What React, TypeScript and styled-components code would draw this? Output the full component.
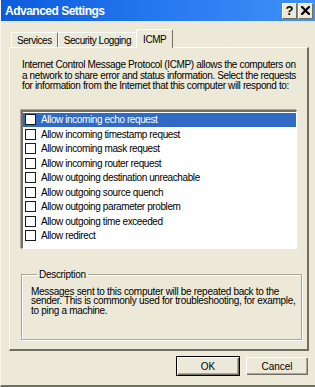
import React from "react";
import styled, { createGlobalStyle } from "styled-components";

const Global = createGlobalStyle`
  html, body { margin: 0; padding: 0; background: #ECE9D8; }
  body { font-family: "Liberation Sans", Arial, sans-serif; }
  * { box-sizing: border-box; }
`;

const Window = styled.div`
  width: 315px;
  height: 387px;
  background: #ECE9D8;
  display: flex;
  flex-direction: column;
  border-left: 1px solid #F5F4EE;
  border-bottom: 2px solid #716F64;
  overflow: hidden;
`;

const TitleBar = styled.div`
  height: 21px;
  flex: none;
  display: flex;
  align-items: center;
  padding: 0 2px 0 4px;
  background: linear-gradient(to right, #0B5BDD 0%, #2A7AF0 55%, #4090F8 100%);
`;

const Title = styled.div`
  flex: 1;
  color: #fff;
  font-weight: bold;
  font-size: 12px;
  letter-spacing: -0.5px;
`;

const CaptionButton = styled.div`
  width: 15px;
  height: 16px;
  margin-left: 1px;
  background: #ECE9D8;
  border-top: 1px solid #fff;
  border-left: 1px solid #fff;
  border-right: 1px solid #716F64;
  border-bottom: 1px solid #716F64;
  display: flex;
  align-items: center;
  justify-content: center;
  font-weight: bold;
  font-size: 13px;
  color: #000;
  line-height: 1;
`;

const Body = styled.div`
  flex: 1;
  display: flex;
  flex-direction: column;
  padding: 8px 6px 0 8px;
`;

const TabRow = styled.div`
  display: flex;
  align-items: flex-end;
  height: 19px;
  padding-left: 2px;
  margin-bottom: -1px;
  position: relative;
  z-index: 1;
`;

const Tab = styled.div<{ $active?: boolean }>`
  height: ${(p) => (p.$active ? 19 : 15)}px;
  padding: 0 ${(p) => (p.$active ? 6 : 5)}px;
  margin: ${(p) => (p.$active ? "0 -1px 0 -1px" : "0 0 1px 0")};
  display: flex;
  align-items: center;
  font-size: 10px;
  letter-spacing: -0.45px;
  color: #000;
  background: #ECE9D8;
  border-top: 1px solid #fff;
  border-left: 1px solid #fff;
  border-right: 1px solid #716F64;
  border-radius: 2px 2px 0 0;
`;

const Panel = styled.div`
  height: 304px;
  flex: none;
  background: #ECE9D8;
  border-top: 1px solid #fff;
  border-left: 1px solid #fff;
  border-right: 2px solid #716F64;
  border-bottom: 2px solid #716F64;
  display: flex;
  flex-direction: column;
  padding: 12px 10px 0 11px;
`;

const Intro = styled.div`
  font-size: 10px;
  line-height: 10.5px;
  letter-spacing: -0.36px;
  color: #000;
  white-space: nowrap;
  padding-left: 1px;
`;

const ListBox = styled.div`
  margin-top: 18px;
  height: 139px;
  background: #fff;
  border-top: 2px solid #716F64;
  border-left: 2px solid #716F64;
  border-right: 1px solid #fff;
  border-bottom: 1px solid #fff;
  box-shadow: -1px -1px 0 #ACA899;
  padding-top: 1px;
`;

const Row = styled.div<{ $selected?: boolean }>`
  height: 14.5px;
  display: flex;
  align-items: center;
  padding-left: 2px;
  background: ${(p) => (p.$selected ? "#316AC5" : "transparent")};
  color: ${(p) => (p.$selected ? "#fff" : "#000")};
  font-size: 10px;
  letter-spacing: -0.4px;
  white-space: nowrap;
`;

const Check = styled.span`
  width: 11px;
  height: 11px;
  flex: none;
  background: #fff;
  border: 1px solid #1A1A1A;
  margin-right: 5px;
`;

const GroupBox = styled.fieldset`
  margin: 20px 0 0 0;
  padding: 7px 6px 0 9px;
  height: 71px;
  border: 1px solid #ACA899;
  box-shadow: 1px 1px 0 #fff, inset 1px 1px 0 #fff;
  border-radius: 0;
`;

const Legend = styled.legend`
  font-size: 10px;
  letter-spacing: -0.3px;
  padding: 0 2px;
  margin-left: 6px;
  color: #000;
`;

const DescText = styled.div`
  font-size: 10px;
  line-height: 9.5px;
  letter-spacing: -0.3px;
  white-space: nowrap;
  color: #000;
`;

const ButtonRow = styled.div`
  display: flex;
  justify-content: flex-end;
  gap: 5px;
  padding-top: 5px;
  padding-right: 0;
`;

const Button = styled.button<{ $default?: boolean }>`
  width: 64px;
  height: 20px;
  padding: 0;
  font-family: "Liberation Sans", Arial, sans-serif;
  font-size: 10px;
  color: #000;
  background: #ECE9D8;
  border: 1px solid ${(p) => (p.$default ? "#000" : "#ECE9D8")};
  box-shadow: inset 1px 1px 0 #fff, inset -1px -1px 0 #716F64, inset -2px -2px 0 #ACA899;
  border-radius: 0;
`;

const items = [
  "Allow incoming echo request",
  "Allow incoming timestamp request",
  "Allow incoming mask request",
  "Allow incoming router request",
  "Allow outgoing destination unreachable",
  "Allow outgoing source quench",
  "Allow outgoing parameter problem",
  "Allow outgoing time exceeded",
  "Allow redirect",
];

export default function App() {
  return (
    <Window>
      <Global />
      <TitleBar>
        <Title>Advanced Settings</Title>
        <CaptionButton>?</CaptionButton>
        <CaptionButton>
          <svg width="9" height="9" viewBox="0 0 9 9">
            <path d="M1 1 L8 8 M8 1 L1 8" stroke="#000" strokeWidth="2.2" strokeLinecap="square" />
          </svg>
        </CaptionButton>
      </TitleBar>
      <Body>
        <TabRow>
          <Tab>Services</Tab>
          <Tab>Security Logging</Tab>
          <Tab $active>ICMP</Tab>
        </TabRow>
        <Panel>
          <Intro>
            Internet Control Message Protocol (ICMP) allows the computers on
            <br />
            a network to share error and status information. Select the requests
            <br />
            for information from the Internet that this computer will respond to:
          </Intro>
          <ListBox>
            {items.map((t, i) => (
              <Row key={t} $selected={i === 0}>
                <Check />
                {t}
              </Row>
            ))}
          </ListBox>
          <GroupBox>
            <Legend>Description</Legend>
            <DescText>
              Messages sent to this computer will be repeated back to the
              <br />
              sender. This is commonly used for troubleshooting, for example,
              <br />
              to ping a machine.
            </DescText>
          </GroupBox>
        </Panel>
        <ButtonRow>
          <Button $default>OK</Button>
          <Button>Cancel</Button>
        </ButtonRow>
      </Body>
    </Window>
  );
}
